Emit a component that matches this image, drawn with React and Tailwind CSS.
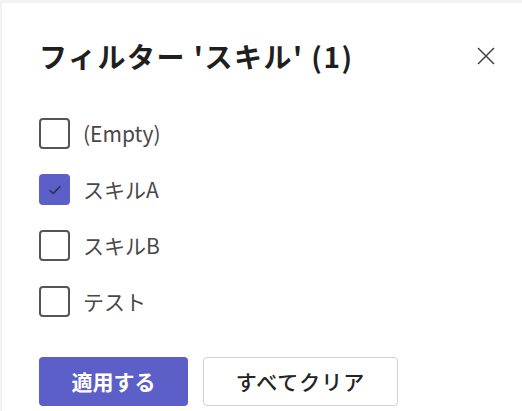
import React from "react";

const font = { fontFamily: '"Noto Sans CJK JP", "Noto Sans", sans-serif' };

function Box({ checked }) {
  if (checked) {
    return (
      <div className="w-[31px] h-[31px] rounded-[4px] bg-[#5b5fc7] flex items-center justify-center shrink-0">
        <svg width="16" height="16" viewBox="0 0 16 16" fill="none">
          <path d="M3 8.5 L6.3 11.5 L13 4.5" stroke="#2b2b4a" strokeWidth="1.4" strokeLinecap="round" strokeLinejoin="round" />
        </svg>
      </div>
    );
  }
  return <div className="w-[31px] h-[31px] rounded-[4px] border-2 border-[#555] bg-white shrink-0" />;
}

export default function App() {
  const items = [
    { label: "(Empty)", checked: false },
    { label: "スキルA", checked: true },
    { label: "スキルB", checked: false },
    { label: "テスト", checked: false },
  ];
  return (
    <div className="w-[522px] h-[411px] bg-[#f3f2f5] pt-[3px] pl-[2px] overflow-hidden" style={font}>
      <div className="w-full h-full bg-white pl-[37px] pr-[26px] flex flex-col">
        <div className="flex items-center justify-between h-[60px] mt-[23px]">
          <div className="text-[28px] font-bold text-[#1f1f1f] leading-none tracking-[1.5px]">
            フィルター 'スキル' (1)
          </div>
          <svg width="20" height="20" viewBox="0 0 20 20" fill="none" className="mr-[0px]">
            <path d="M2 2 L18 18 M18 2 L2 18" stroke="#424242" strokeWidth="1.5" />
          </svg>
        </div>
        <div className="flex flex-col gap-[25px] mt-[32px]">
          {items.map((it) => (
            <div key={it.label} className="flex items-center gap-[13px] h-[31px]">
              <Box checked={it.checked} />
              <span className="text-[21px] text-[#484848] leading-none">{it.label}</span>
            </div>
          ))}
        </div>
        <div className="flex gap-[15px] mt-[40px]">
          <button className="w-[149px] h-[49px] rounded-[4px] bg-[#5b5fc7] text-white text-[21px] font-bold flex items-center justify-center">
            適用する
          </button>
          <button className="w-[195px] h-[49px] rounded-[4px] bg-white border border-[#d1d1d1] text-[#242424] text-[21px] font-medium tracking-[1px] flex items-center justify-center">
            すべてクリア
          </button>
        </div>
      </div>
    </div>
  );
}
